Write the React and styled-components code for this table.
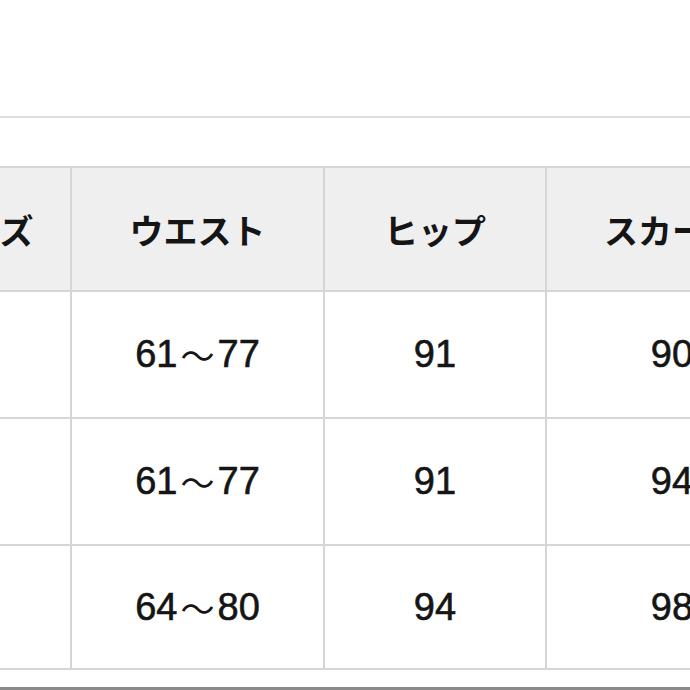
import React from 'react'
import styled, { createGlobalStyle } from 'styled-components'

const GlobalStyle = createGlobalStyle`
  html, body {
    margin: 0;
    padding: 0;
    background: #ffffff;
    overflow: hidden;
  }
  body {
    font-family: "Noto Sans CJK JP", "Noto Sans", sans-serif;
  }
`

const Page = styled.div`
  width: 690px;
  height: 690px;
  display: flex;
  flex-direction: column;
  background: #fff;
  overflow: hidden;
`

const TopSpace = styled.div`
  height: 116px;
  flex-shrink: 0;
`

const Divider = styled.div`
  height: 2px;
  background: #dedede;
  flex-shrink: 0;
`

const Gap = styled.div`
  height: ${p => p.h}px;
  flex-shrink: 0;
`

const Table = styled.div`
  display: grid;
  grid-template-columns: 174px 251px 220px 250px;
  grid-template-rows: 122px 125px 125px 122px;
  gap: 2px;
  padding: 2px;
  background: #d5d5d5;
  margin-left: -106px;
  width: max-content;
  flex-shrink: 0;
`

const Cell = styled.div`
  display: flex;
  align-items: center;
  justify-content: center;
  background: ${p => (p.head ? '#efefef' : '#ffffff')};
  color: #151515;
  white-space: nowrap;
  font-family: ${p =>
    p.head
      ? '"Noto Sans CJK JP", sans-serif'
      : '"Liberation Sans", "Noto Sans CJK JP", sans-serif'};
  font-size: ${p => (p.head ? '34px' : '38px')};
  font-weight: ${p => (p.head ? 700 : 400)};
  -webkit-text-stroke: ${p => (p.head ? '0' : '0.6px #151515')};
`

const Tilde = styled.span`
  display: inline-block;
  margin: 0 3px;
  font-size: 34px;
  -webkit-text-stroke: 0;
`

const BottomBar = styled.div`
  height: 3px;
  background: #8a8a8a;
  flex-shrink: 0;
`

const headers = ['サイズ', 'ウエスト', 'ヒップ', 'スカート']
const rows = [
  ['S', ['61', '77'], '91', '90'],
  ['M', ['61', '77'], '91', '94'],
  ['L', ['64', '80'], '94', '98'],
]

export default function App() {
  return (
    <>
      <GlobalStyle />
      <Page>
        <TopSpace />
        <Divider />
        <Gap h={48} />
        <Table>
          {headers.map(h => (
            <Cell head key={h}>{h}</Cell>
          ))}
          {rows.map((row, i) =>
            row.map((v, j) => (
              <Cell key={i + '-' + j}>
                {j === 0 ? '' : Array.isArray(v) ? (
                  <>
                    {v[0]}
                    <Tilde>〜</Tilde>
                    {v[1]}
                  </>
                ) : (
                  v
                )}
              </Cell>
            ))
          )}
        </Table>
        <Gap h={17} />
        <BottomBar />
      </Page>
    </>
  )
}
